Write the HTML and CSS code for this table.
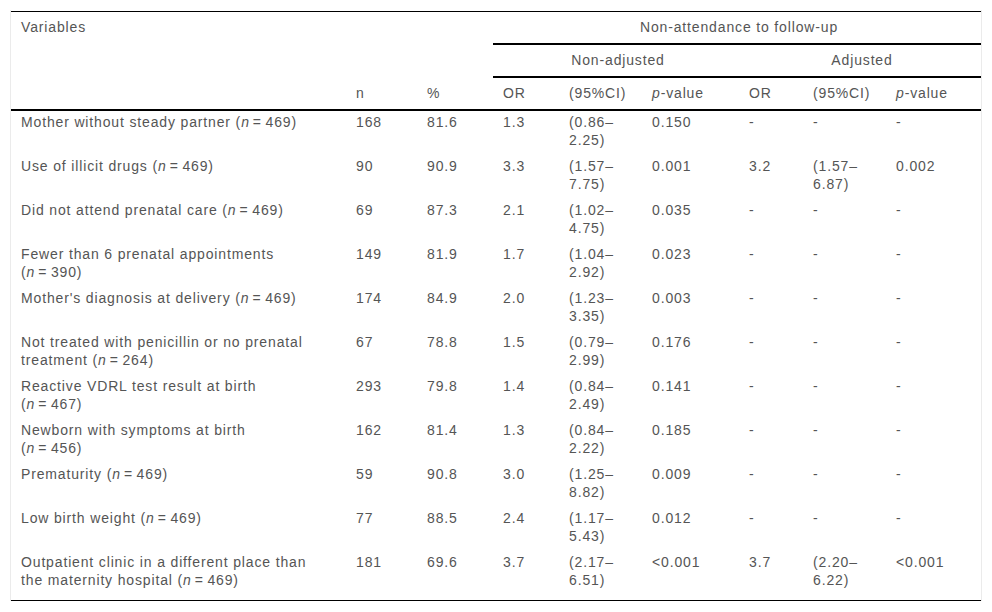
FILE: index.html
```html
<!DOCTYPE html>
<html lang="en">
<head>
<meta charset="utf-8">
<title>Non-attendance to follow-up</title>
<link rel="stylesheet" href="styles.css">
</head>
<body>
<div class="wrap">
<table class="data">
  <colgroup>
    <col class="c-var"><col class="c-n"><col class="c-pct">
    <col class="c-or"><col class="c-ci"><col class="c-p">
    <col class="c-or2"><col class="c-ci2"><col class="c-p2">
  </colgroup>
  <thead>
    <tr>
      <th rowspan="3" class="top first">Variables</th>
      <th rowspan="3" class="bottom">n</th>
      <th rowspan="3" class="bottom">%</th>
      <th colspan="6" class="group">Non-attendance to follow-up</th>
    </tr>
    <tr>
      <th colspan="3" class="group">Non-adjusted</th>
      <th colspan="3" class="group">Adjusted</th>
    </tr>
    <tr>
      <th>OR</th><th>(95%CI)</th><th><i>p</i>-value</th>
      <th>OR</th><th>(95%CI)</th><th><i>p</i>-value</th>
    </tr>
  </thead>
  <tbody>
    <tr><td class="first">Mother without steady partner <span class="nw">(<i>n</i>&#8201;=&#8201;469)</span></td><td>168</td><td>81.6</td><td>1.3</td><td>(0.86–2.25)</td><td>0.150</td><td>-</td><td>-</td><td>-</td></tr>
    <tr><td class="first">Use of illicit drugs <span class="nw">(<i>n</i>&#8201;=&#8201;469)</span></td><td>90</td><td>90.9</td><td>3.3</td><td>(1.57–7.75)</td><td>0.001</td><td>3.2</td><td>(1.57–6.87)</td><td>0.002</td></tr>
    <tr><td class="first">Did not attend prenatal care <span class="nw">(<i>n</i>&#8201;=&#8201;469)</span></td><td>69</td><td>87.3</td><td>2.1</td><td>(1.02–4.75)</td><td>0.035</td><td>-</td><td>-</td><td>-</td></tr>
    <tr><td class="first">Fewer than 6 prenatal appointments <span class="nw">(<i>n</i>&#8201;=&#8201;390)</span></td><td>149</td><td>81.9</td><td>1.7</td><td>(1.04–2.92)</td><td>0.023</td><td>-</td><td>-</td><td>-</td></tr>
    <tr><td class="first">Mother's diagnosis at delivery <span class="nw">(<i>n</i>&#8201;=&#8201;469)</span></td><td>174</td><td>84.9</td><td>2.0</td><td>(1.23–3.35)</td><td>0.003</td><td>-</td><td>-</td><td>-</td></tr>
    <tr><td class="first">Not treated with penicillin or no prenatal treatment <span class="nw">(<i>n</i>&#8201;=&#8201;264)</span></td><td>67</td><td>78.8</td><td>1.5</td><td>(0.79–2.99)</td><td>0.176</td><td>-</td><td>-</td><td>-</td></tr>
    <tr><td class="first">Reactive VDRL test result at birth <span class="nw">(<i>n</i>&#8201;=&#8201;467)</span></td><td>293</td><td>79.8</td><td>1.4</td><td>(0.84–2.49)</td><td>0.141</td><td>-</td><td>-</td><td>-</td></tr>
    <tr><td class="first">Newborn with symptoms at birth<br><span class="nw">(<i>n</i>&#8201;=&#8201;456)</span></td><td>162</td><td>81.4</td><td>1.3</td><td>(0.84–2.22)</td><td>0.185</td><td>-</td><td>-</td><td>-</td></tr>
    <tr><td class="first">Prematurity <span class="nw">(<i>n</i>&#8201;=&#8201;469)</span></td><td>59</td><td>90.8</td><td>3.0</td><td>(1.25–8.82)</td><td>0.009</td><td>-</td><td>-</td><td>-</td></tr>
    <tr><td class="first">Low birth weight <span class="nw">(<i>n</i>&#8201;=&#8201;469)</span></td><td>77</td><td>88.5</td><td>2.4</td><td>(1.17–5.43)</td><td>0.012</td><td>-</td><td>-</td><td>-</td></tr>
    <tr><td class="first">Outpatient clinic in a different place than the maternity hospital <span class="nw">(<i>n</i>&#8201;=&#8201;469)</span></td><td>181</td><td>69.6</td><td>3.7</td><td>(2.17–6.51)</td><td>&lt;0.001</td><td>3.7</td><td>(2.20–6.22)</td><td>&lt;0.001</td></tr>
  </tbody>
</table>
</div>
</body>
</html>
```

FILE: styles.css
```css
html, body {
  margin: 0;
  padding: 0;
  background: #fff;
}

body {
  font-family: "Liberation Sans", Arial, sans-serif;
  font-size: 14px;
  line-height: 18px;
  letter-spacing: 0.85px;
  color: #555;
}

.wrap {
  width: 970px;
  margin: 10px 0 0 10px;
  padding-top: 1px;
  border-left: 1px solid #ebebeb;
  border-right: 1px solid #ebebeb;
}

.data {
  width: 970px;
  table-layout: fixed;
  border-collapse: collapse;
  border-top: 1px solid #000;
  border-bottom: 1px solid #000;
}

.c-var { width: 335px; }
.c-n { width: 71px; }
.c-pct { width: 76px; }
.c-or { width: 66px; }
.c-ci { width: 83px; }
.c-p { width: 97px; }
.c-or2 { width: 64px; }
.c-ci2 { width: 83px; }
.c-p2 { width: 95px; }

.data th {
  font-weight: normal;
  text-align: left;
  vertical-align: top;
  padding: 6px 6px 7px 10px;
}

.data th.top { vertical-align: top; }
.data th.bottom { vertical-align: bottom; }

.data th.group {
  text-align: center;
  border-bottom: 2px solid #000;
}

.data thead tr:last-child th,
.data th.top,
.data th.bottom {
  border-bottom: 2px solid #000;
}

.data td {
  vertical-align: top;
  padding: 2px 6px 6px 10px;
}

.data .first {
  padding-right: 30px;
}

.nw {
  white-space: nowrap;
}

.nw i {
  letter-spacing: 0.3px;
}

.data tbody tr:last-child td {
  padding-bottom: 11px;
}
```
